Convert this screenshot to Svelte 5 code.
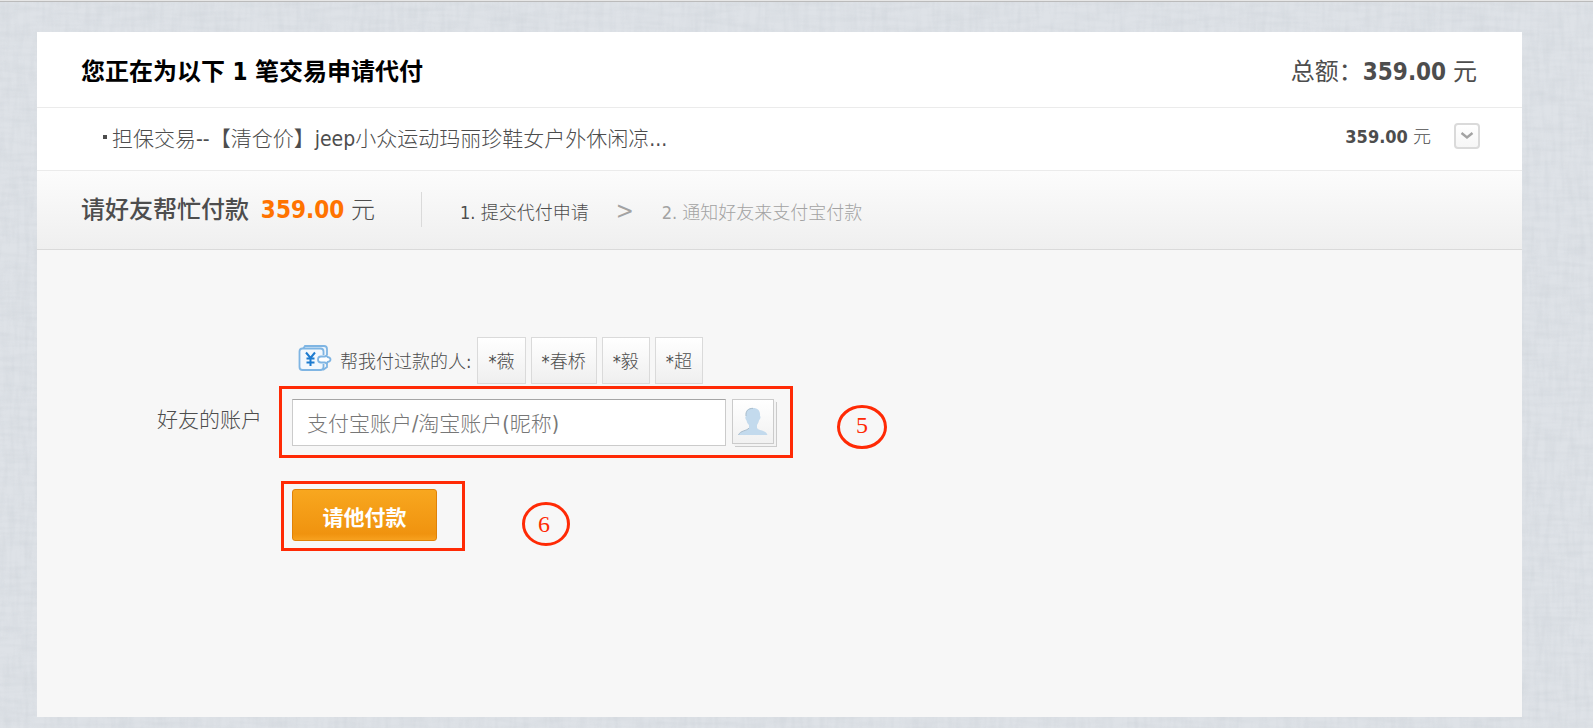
<script>
  const helpers = ['*薇', '*春桥', '*毅', '*超'];
  let account = $state('');
</script>

<div class="page">
  <svg class="linen" width="100%" height="100%" aria-hidden="true" color-interpolation-filters="sRGB">
    <filter id="across" x="0" y="0" width="100%" height="100%">
      <feTurbulence type="fractalNoise" baseFrequency="0.03 0.2" numOctaves="2" seed="3" />
      <feColorMatrix values="0 0 0 0 0.7  0 0 0 0 0.73  0 0 0 0 0.76  1.6 0 0 0 -0.6" />
    </filter>
    <filter id="down" x="0" y="0" width="100%" height="100%">
      <feTurbulence type="fractalNoise" baseFrequency="0.2 0.03" numOctaves="2" seed="8" />
      <feColorMatrix values="0 0 0 0 0.7  0 0 0 0 0.73  0 0 0 0 0.76  1.6 0 0 0 -0.6" />
    </filter>
    <rect width="100%" height="100%" filter="url(#across)" opacity="0.16" />
    <rect width="100%" height="100%" filter="url(#down)" opacity="0.16" />
  </svg>
  <main class="card">
    <header class="head">
      <h1>您正在为以下 1 笔交易申请代付</h1>
      <p class="total">总额：<strong>359.00</strong> 元</p>
    </header>

    <section class="item">
      <p class="name"><span class="bullet"></span>担保交易--【清仓价】jeep小众运动玛丽珍鞋女户外休闲凉...</p>
      <p class="price"><strong>359.00</strong> 元</p>
      <button class="toggle" type="button" aria-label="展开">
        <svg width="14" height="8" viewBox="0 0 14 8"><path d="M1.500 1 L7 5.500 L12.500 1" fill="none" stroke="#a3a3a3" stroke-width="2.4" /></svg>
      </button>
    </section>

    <section class="steps">
      <h2>请好友帮忙付款 <strong>359.00</strong> <span>元</span></h2>
      <ol>
        <li>1. 提交代付申请</li>
        <li class="next"><span class="arrow">&gt;</span>2. 通知好友来支付宝付款</li>
      </ol>
    </section>

    <form class="form" onsubmit={(e) => e.preventDefault()}>
      <div class="field helpers">
        <svg class="wallet" width="34" height="28" viewBox="0 0 34 28" fill="none" stroke="#7fb5e3" stroke-width="1.8">
          <path d="M5 5 L7 2 H26 Q29 2 29 5 V11" fill="#edf5fc" />
          <path d="M29 19 V23 L25 26" />
          <path d="M25.500 11 V7.500 Q25.500 4.500 22.500 4.500 H4.500 Q1.500 4.500 1.500 7.500 V23 Q1.500 26 4.500 26 H22.500 Q25.500 26 25.500 23 V20" fill="#f3f8fd" />
          <path d="M20 15.500 Q20 12.500 23 12.500 H27 L28.500 11.500 L29.500 13 Q32.500 13.500 32.500 15.500 Q32.500 17.500 29.500 18 L28.500 19.500 L27 18.500 H23 Q20 18.500 20 15.500 Z" fill="#fff" />
          <path d="M8 8.500 L12.500 14 L17 8.500 M12.500 14 V22 M8.500 14.500 H16.500 M8.500 18.500 H16.500" stroke="#1d7bd0" stroke-width="2" />
        </svg>
        <span class="caption">帮我付过款的人:</span>
        <div class="chips">
          {#each helpers as person}
            <button type="button" class="chip" onclick={() => (account = person)}>{person}</button>
          {/each}
        </div>
      </div>

      <label for="account">好友的账户</label>
      <div class="field entry">
        <input id="account" type="text" bind:value={account} placeholder="支付宝账户/淘宝账户(昵称)" />
        <button type="button" class="contacts" aria-label="联系人">
          <svg width="30" height="30" viewBox="0 0 30 30">
            <path d="M15 1 C20 1 22.500 4 22 9 C23 10 22.500 12 21 13.500 C20.500 16 19.500 17 19 18 V21 C21 24 28 23 29.500 28 H0.500 C2 23 9 24 11 21 V18 C9.500 17 9 15 8.500 13.500 C7 12 7 10 8 9 C7.500 4 9 1 15 1 Z" fill="#c3daed" />
            <path d="M8 9 C7.500 4 10 1.500 15 1.300 M0.500 28 C2 23.500 9 24 11 21" fill="none" stroke="#a9bccb" stroke-width="1" />
          </svg>
        </button>
        <span class="frame"></span>
        <svg class="mark" width="52" height="46" viewBox="0 0 52 46">
          <ellipse cx="26" cy="23" rx="23.500" ry="20.500" />
          <text x="26" y="29">5</text>
        </svg>
      </div>

      <div class="field action">
        <button type="submit" class="submit">请他付款</button>
        <span class="frame"></span>
        <svg class="mark" width="52" height="46" viewBox="0 0 52 46">
          <ellipse cx="26" cy="23" rx="22.500" ry="20.500" />
          <text x="24" y="31">6</text>
        </svg>
      </div>
    </form>
  </main>
</div>

<style>
  :global(body) {
    margin: 0;
  }
  .page {
    --sans: 'DejaVu Sans Condensed', 'Noto Sans CJK SC', sans-serif;
    box-sizing: border-box;
    position: relative;
    min-height: 100vh;
    display: flex;
    padding: 31px 71px 11px 37px;
    border-top: 1px solid #e6e6e6;
    box-shadow: inset 0 1px 0 #bbb;
    background: #dee2e7;
    color: #4d4d4d;
    font-family: var(--sans);
    font-weight: 300;
  }
  .linen {
    position: absolute;
    inset: 1px 0 0;
    height: calc(100% - 1px);
  }
  h1,
  h2,
  p,
  ol {
    margin: 0;
    padding: 0;
  }
  button,
  input {
    box-sizing: border-box;
    font-family: inherit;
    font-weight: inherit;
    color: inherit;
  }
  strong {
    font-weight: 700;
  }
  .card {
    position: relative;
    flex: 1;
    display: flex;
    flex-direction: column;
    min-width: 0;
    background: #f7f7f7;
  }
  .head,
  .item,
  .steps {
    box-sizing: border-box;
    display: flex;
    align-items: center;
    padding: 0 44px;
    border-bottom: 1px solid #ebebeb;
    background: #fff;
  }
  .head {
    height: 76px;
    padding: 4px 45px 0 44px;
    justify-content: space-between;
    font-size: 24px;
    line-height: 32px;
  }
  h1 {
    font-size: 24px;
    font-weight: 700;
    color: #000;
  }
  .total {
    font-weight: 400;
  }
  .item {
    height: 63px;
    padding: 0 42px 0 66px;
    font-size: 18px;
    line-height: 28px;
  }
  .name {
    flex: 1;
    display: flex;
    align-items: center;
    gap: 5px;
    font-size: 21px;
  }
  .bullet {
    width: 4px;
    height: 4px;
    margin-bottom: 4px;
    background: #4d4d4d;
  }
  .price {
    padding-bottom: 4px;
  }
  .toggle {
    width: 26px;
    height: 26px;
    margin: 0 0 6px 23px;
    padding: 0;
    display: grid;
    place-items: center;
    border: 2px solid #dadada;
    border-radius: 4px;
    background: linear-gradient(#fff, #f6f6f6);
  }
  .steps {
    height: 79px;
    padding-bottom: 2px;
    border-bottom-color: #dadada;
    background: linear-gradient(#fcfcfc, #efefef);
  }
  h2 {
    padding-top: 2px;
    font-size: 24px;
    line-height: 32px;
    font-weight: 500;
  }
  h2 strong {
    margin-left: 5px;
    color: #ff7300;
  }
  h2 span {
    font-weight: 300;
  }
  ol {
    display: flex;
    list-style: none;
    margin-left: 46px;
    padding-left: 38px;
    border-left: 1px solid #dadada;
    font-size: 18px;
    line-height: 35px;
  }
  li {
    padding-top: 3px;
    margin-bottom: -3px;
  }
  .next {
    display: flex;
    color: #a3a3a3;
  }
  .arrow {
    margin: 0 28px 0 27px;
    font-size: 24px;
    line-height: 32px;
  }
  .form {
    flex: 1;
    display: grid;
    grid-template-columns: 225px 1fr;
    column-gap: 30px;
    align-content: start;
    padding-top: 87px;
    font-size: 21px;
  }
  .field {
    grid-column: 2;
    position: relative;
    display: flex;
    align-items: center;
    justify-self: start;
  }
  label {
    align-self: center;
    padding-bottom: 6px;
    text-align: right;
    line-height: 28px;
  }
  .helpers {
    padding-left: 6px;
    margin-bottom: 15px;
    font-size: 18px;
  }
  .wallet {
    margin-bottom: 5px;
  }
  .caption {
    margin: 0 6px 2px 8px;
  }
  .chips {
    display: flex;
    gap: 5px;
  }
  .chip {
    height: 47px;
    padding: 0 10px 2px;
    border: 1px solid #dadada;
    background: linear-gradient(#fff, #efefef);
    font-size: 18px;
  }
  .entry {
    gap: 6px;
    align-items: start;
  }
  input {
    width: 434px;
    height: 47px;
    padding: 2px 14px 0;
    border: 1px solid #cbcbcb;
    border-top-color: #a5a5a5;
    background: #fff;
    font-size: 21px;
  }
  input::placeholder {
    color: #777;
    opacity: 1;
  }
  .contacts {
    width: 42px;
    height: 45px;
    padding: 0;
    display: grid;
    place-items: center;
    border: 1px solid #cbcbcb;
    background: linear-gradient(#fff, #f1f1f1);
    box-shadow: 2px 2px 0 #f3f3f3, 3px 3px 0 #cbcbcb;
  }
  .action {
    margin-top: 43px;
  }
  .submit {
    width: 145px;
    height: 52px;
    padding-top: 2px;
    border: 1px solid #e08208;
    border-radius: 3px;
    background: linear-gradient(#f8a71f, #f0930f 88%, #f7a11f);
    color: #fff;
    font-size: 21px;
    font-weight: 700;
  }
  .frame {
    position: absolute;
    inset: -13px -19px -12px -13px;
    border: 3px solid #ff2a05;
    pointer-events: none;
  }
  .action .frame {
    inset: -8px -28px -10px -11px;
  }
  .mark {
    position: absolute;
    left: 544px;
    top: 5px;
  }
  .action .mark {
    left: 228px;
    top: 12px;
  }
  .mark ellipse {
    fill: none;
    stroke: #ff2a05;
    stroke-width: 3;
  }
  .mark text {
    fill: #ff2a05;
    font: 400 24px 'Liberation Serif', serif;
    text-anchor: middle;
  }
</style>
